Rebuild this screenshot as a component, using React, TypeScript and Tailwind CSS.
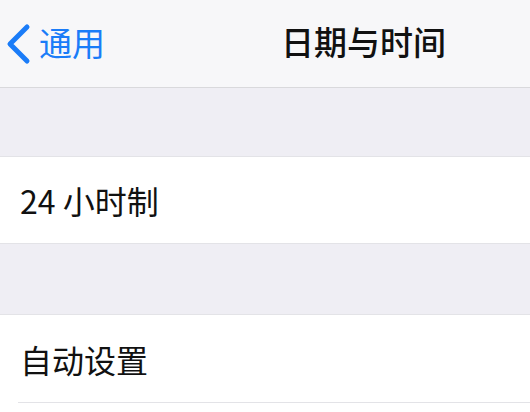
export default function App() {
  return (
    <div
      className="w-[530px] h-[412px] overflow-hidden bg-white text-[#111]"
      style={{ fontFamily: '"Noto Sans CJK SC", "Noto Sans", sans-serif' }}
    >
      {/* nav bar */}
      <div className="relative h-[88px] bg-[#f7f7f9] border-b border-[#d9d9dc] flex items-center">
        <div className="absolute left-[5px] top-0 h-full flex items-center gap-[8px] text-[#1a7cf8]">
          <svg width="26" height="42" viewBox="0 0 26 42" fill="none">
            <path d="M22 4 L5 21 L22 38" stroke="currentColor" strokeWidth="5" strokeLinecap="round" strokeLinejoin="round" />
          </svg>
          <span className="text-[33px] leading-none mb-[2px]">通用</span>
        </div>
        <span className="text-[33px] leading-none font-medium ml-[281px] mb-[4px]">日期与时间</span>
      </div>

      <div className="h-[69px] bg-[#efeef4] border-b border-[#e3e3e7]" />

      <div className="h-[87px] bg-white border-b border-[#e3e3e7] flex items-center pl-[20px]">
        <span className="text-[32px] leading-none">24 小时制</span>
      </div>

      <div className="h-[71px] bg-[#efeef4] border-b border-[#e3e3e7]" />

      <div className="h-[87px] bg-white flex items-center pl-[20px]">
        <span className="text-[32px] leading-none">自动设置</span>
      </div>
      <div className="ml-[18px] border-b border-[#e3e3e7]" />
    </div>
  );
}
